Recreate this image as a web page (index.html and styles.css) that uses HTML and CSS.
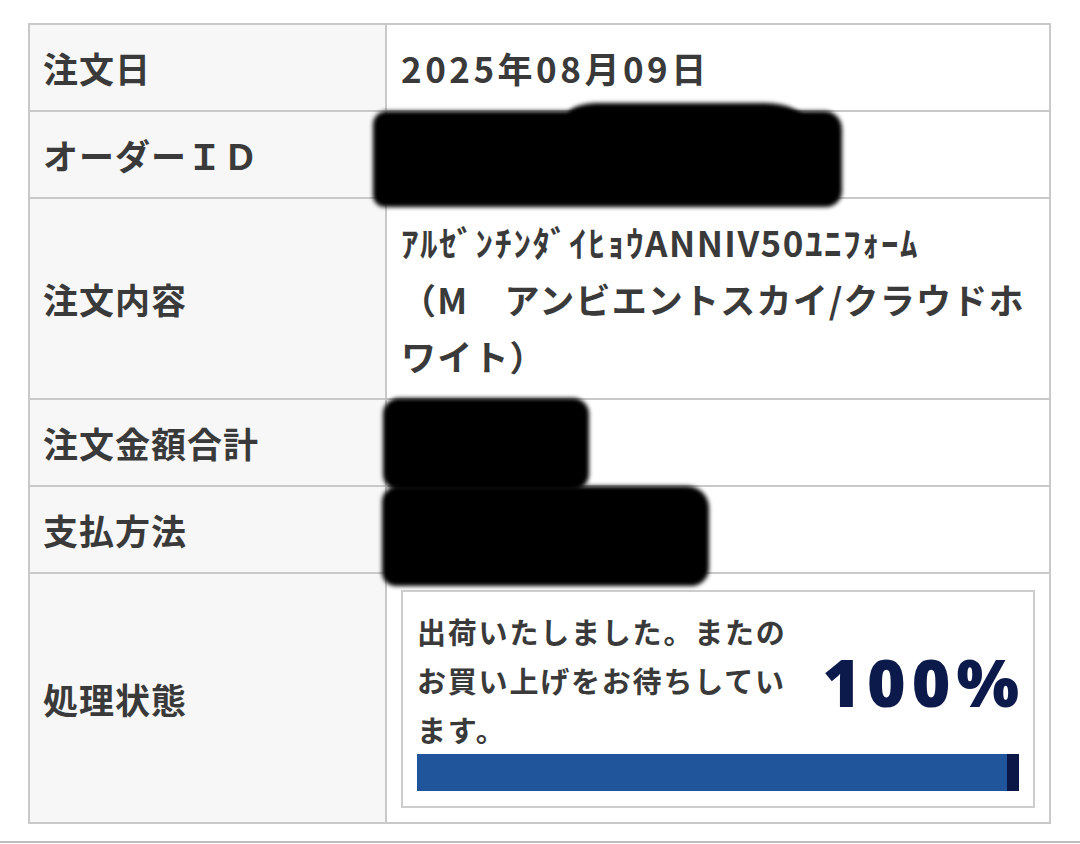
FILE: index.html
```html
<!DOCTYPE html>
<html lang="ja">
<head>
<meta charset="utf-8">
<title>注文詳細</title>
<link rel="stylesheet" href="styles.css">
</head>
<body>
<div class="order">
  <div class="th">注文日</div>
  <div class="td"><span class="date">2025年08月09日</span></div>

  <div class="th">オーダーＩＤ</div>
  <div class="td">&nbsp;</div>

  <div class="th">注文内容</div>
  <div class="td"><span class="item-code">ｱﾙｾﾞﾝﾁﾝﾀﾞｲﾋｮｳANNIV50ﾕﾆﾌｫｰﾑ</span><br><span class="item-var">（M　アンビエントスカイ/クラウドホワイト）</span></div>

  <div class="th">注文金額合計</div>
  <div class="td">&nbsp;</div>

  <div class="th">支払方法</div>
  <div class="td">&nbsp;</div>

  <div class="th">処理状態</div>
  <div class="td td-status">
    <div class="status-box">
      <div class="status-top">
        <p class="status-msg">出荷いたしました。またのお買い上げをお待ちしています。</p>
        <span class="pct">100%</span>
      </div>
      <div class="bar"><span class="bar-end"></span></div>
    </div>
  </div>

  <div class="redact r-id"></div>
  <div class="redact r-id-top"></div>
  <div class="redact r-total"></div>
  <div class="redact r-pay"></div>
</div>
<div class="rule"></div>
</body>
</html>
```
FILE: styles.css
```css
html, body {
  margin: 0;
  padding: 0;
  background: #ffffff;
}

body {
  font-family: "Noto Sans CJK JP", "Noto Sans", sans-serif;
  color: #3a3a3a;
  overflow: hidden;
}

.order {
  position: relative;
  display: grid;
  grid-template-columns: 357px 664px;
  width: 1023px;
  margin: 23px 0 0 28px;
  border-top: 2px solid #c9c9c9;
  border-left: 2px solid #c9c9c9;
  box-sizing: border-box;
}

.th, .td {
  box-sizing: border-box;
  border-right: 2px solid #c9c9c9;
  border-bottom: 2px solid #c9c9c9;
  font-size: 35px;
  line-height: 57px;
  font-weight: 700;
  letter-spacing: 1px;
}

.th {
  display: flex;
  align-items: center;
  padding: 14px 13px;
  background: #f7f7f7;
}

.td {
  padding: 14px 14px;
  background: #ffffff;
}

.date {
  letter-spacing: 3.5px;
}

.item-code {
  letter-spacing: 1.5px;
}

.item-var {
  letter-spacing: 1.2px;
}

.td-status {
  padding: 16px 14px 14px 14px;
}

.status-box {
  border: 2px solid #cdcdcd;
  padding: 15px 14px;
}

.status-top {
  display: flex;
  justify-content: space-between;
  align-items: center;
}

.status-msg {
  margin: 0;
  width: 374px;
  font-size: 29px;
  line-height: 49px;
  letter-spacing: 1.8px;
}

.pct {
  font-family: "Open Sans", "Inter", sans-serif;
  font-weight: 800;
  font-size: 66px;
  line-height: 1;
  letter-spacing: 6px;
  color: #0c1a4b;
  margin-right: -6px;
}

.bar {
  display: flex;
  justify-content: flex-end;
  height: 37px;
  background: #20559b;
}

.bar-end {
  width: 12px;
  background: #0b1746;
}

.redact {
  position: absolute;
  background: #000000;
  filter: blur(2px);
}

.r-id {
  left: 343px;
  top: 86px;
  width: 469px;
  height: 96px;
  border-radius: 14px 18px 16px 12px;
}

.r-id-top {
  left: 538px;
  top: 78px;
  width: 237px;
  height: 40px;
  border-radius: 30px 40px 10px 10px / 12px 20px 10px 10px;
}

.r-total {
  left: 353px;
  top: 373px;
  width: 206px;
  height: 92px;
  border-radius: 16px;
}

.r-pay {
  left: 352px;
  top: 461px;
  width: 327px;
  height: 100px;
  border-radius: 16px 22px 18px 14px;
}

.rule {
  margin-top: 17px;
  height: 2px;
  background: #bdbdbd;
}
```
